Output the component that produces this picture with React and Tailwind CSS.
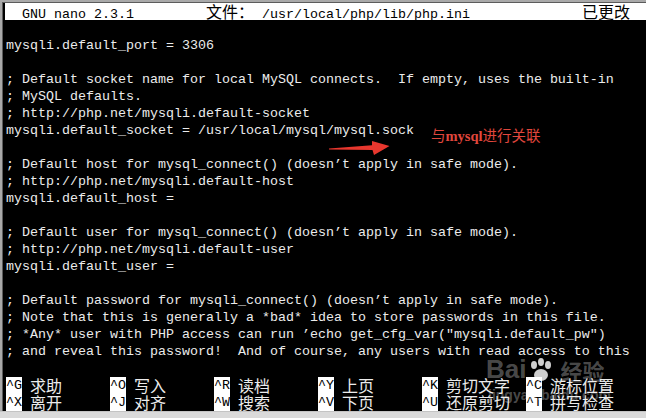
import React from "react";

const MONO = { fontFamily: '"Liberation Mono", "DejaVu Sans Mono", monospace' };

function C({ children }) {
  return (
    <span className="text-[16px] font-['Noto_Sans_CJK_SC',sans-serif]">{children}</span>
  );
}

function Row({ children, className = "" }) {
  return (
    <div className={"h-[17px] leading-[17px] whitespace-pre pl-px overflow-visible " + className}>
      {children}
    </div>
  );
}

function Key({ k, label }) {
  return (
    <div className="w-[104px] shrink-0 flex items-center whitespace-pre">
      <span className="bg-white text-black h-[17px] leading-[17px]">{k}</span>
      <span> </span>
      <C>{label}</C>
    </div>
  );
}

const lines = [
  "mysqli.default_port = 3306",
  "",
  "; Default socket name for local MySQL connects.  If empty, uses the built-in",
  "; MySQL defaults.",
  "; http://php.net/mysqli.default-socket",
  "mysqli.default_socket = /usr/local/mysql/mysql.sock",
  "",
  "; Default host for mysql_connect() (doesn\u2019t apply in safe mode).",
  "; http://php.net/mysqli.default-host",
  "mysqli.default_host =",
  "",
  "; Default user for mysql_connect() (doesn\u2019t apply in safe mode).",
  "; http://php.net/mysqli.default-user",
  "mysqli.default_user =",
  "",
  "; Default password for mysqli_connect() (doesn\u2019t apply in safe mode).",
  "; Note that this is generally a *bad* idea to store passwords in this file.",
  "; *Any* user with PHP access can run \u2019echo get_cfg_var(\"mysqli.default_pw\")",
  "; and reveal this password!  And of course, any users with read access to this",
  "",
];

export default function App() {
  return (
    <div className="w-[646px] h-[418px] bg-[#dadada] flex flex-col relative overflow-hidden">
      <div className="h-[411px] bg-black border-l-2 border-t-2 border-[#a9a9a9] shrink-0">
        <div
          className="h-full border-l border-t border-[#5c5c5c] pl-[2px] text-[13.3333px] text-[#ececec]"
          style={MONO}
        >
          <Row className="bg-white text-black">
            {"  GNU nano 2.3.1         "}
            <C>文件：</C>
            {" /usr/local/php/lib/php.ini              "}
            <C>已更改</C>
          </Row>
          <Row>{""}</Row>
          {lines.map((l, i) => (
            <Row key={i}>{l}</Row>
          ))}
          <div className="h-[17px] leading-[17px] pl-px flex">
            <Key k="^G" label="求助" />
            <Key k="^O" label="写入" />
            <Key k="^R" label="读档" />
            <Key k="^Y" label="上页" />
            <Key k="^K" label="剪切文字" />
            <Key k="^C" label="游标位置" />
          </div>
          <div className="h-[17px] leading-[17px] pl-px flex">
            <Key k="^X" label="离开" />
            <Key k="^J" label="对齐" />
            <Key k="^W" label="搜索" />
            <Key k="^V" label="下页" />
            <Key k="^U" label="还原剪切" />
            <Key k="^T" label="拼写检查" />
          </div>
        </div>
      </div>
      <div className="flex-1 border-t border-[#c4c4c4]" />

      {/* annotation arrow */}
      <svg
        className="absolute left-[326px] top-[136px]"
        width="68"
        height="24"
        viewBox="0 0 68 24"
      >
        <polygon
          points="3,12.6 46,9.2 46,5 63.5,10 48,19 46.5,14 3,13.6"
          fill="#e8372e"
        />
      </svg>
      <div className="absolute left-[431px] top-[125px] h-[20px] leading-[20px] text-[14.5px] text-[#e0473d] whitespace-pre font-['Noto_Sans_CJK_SC',sans-serif]">
        与<span className="font-['Liberation_Serif'] font-bold">mysql</span>进行关联
      </div>

      {/* watermark */}
      <div className="absolute left-[486px] top-[356px] flex items-end gap-[2px] text-white/30 pointer-events-none">
        <span className="text-[26px] leading-[26px] font-bold font-['Liberation_Sans',sans-serif]">Bai</span>
        <svg width="26" height="24" viewBox="0 0 26 24" className="opacity-90">
          <g fill="rgba(255,255,255,0.9)">
            <ellipse cx="6" cy="7" rx="3" ry="4" />
            <ellipse cx="13" cy="4" rx="3" ry="4" />
            <ellipse cx="20" cy="7" rx="3" ry="4" />
            <ellipse cx="13" cy="17" rx="7" ry="6" />
          </g>
        </svg>
        <span className="text-[22px] leading-[24px] font-bold font-['Noto_Sans_CJK_SC',sans-serif] ml-[4px]">经验</span>
      </div>
      <div className="absolute left-[488px] top-[387px] text-[14px] leading-[16px] text-white/30 font-bold font-['Liberation_Sans',sans-serif] pointer-events-none">
        jingyan.baidu.com
      </div>
    </div>
  );
}
